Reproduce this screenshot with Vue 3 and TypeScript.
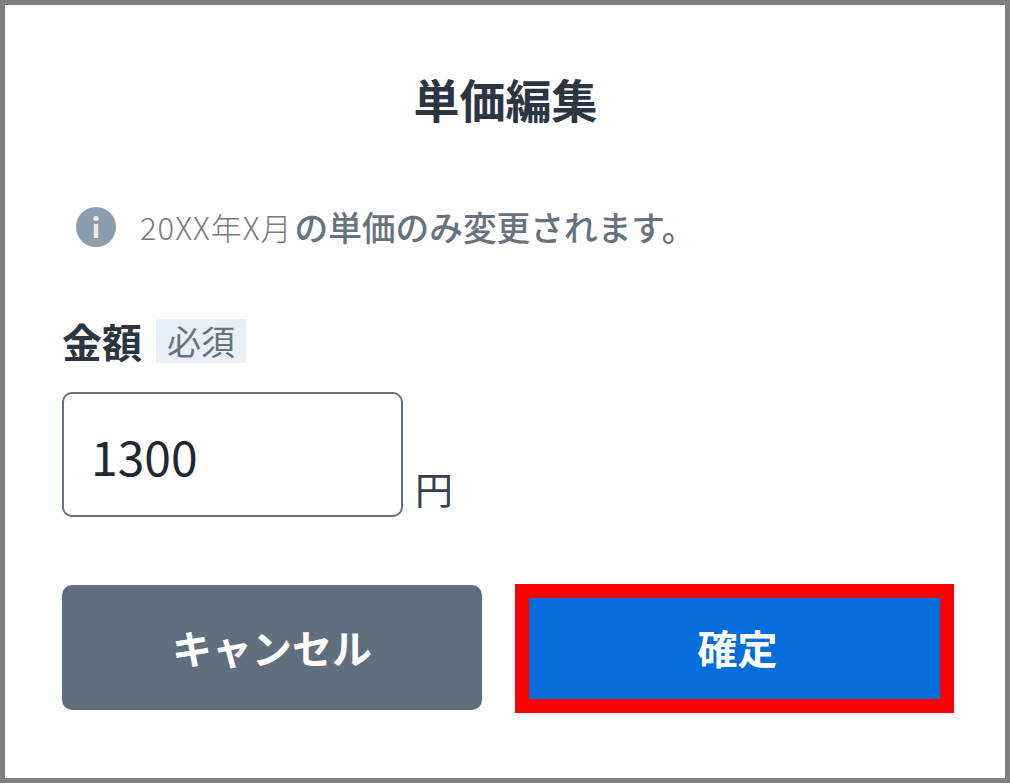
<script setup lang="ts">
const title: string = '単価編集'
</script>

<template>
  <div class="frame">
    <h1 class="title">{{ title }}</h1>
    <div class="notice">
      <svg class="info" width="40" height="40" viewBox="0 0 40 40" aria-hidden="true">
        <circle cx="20" cy="20" r="20" fill="#8d9db0" />
        <circle cx="20" cy="11.5" r="2.6" fill="#e8ecf1" />
        <rect x="17.8" y="17" width="4.4" height="14" fill="#e8ecf1" />
      </svg>
      <span class="date">20XX年X月</span><span class="msg">の単価のみ変更されます。</span>
    </div>
    <div class="label-row">
      <span class="label">金額</span>
      <span class="required">必須</span>
    </div>
    <div class="field-row">
      <div class="input">1300</div>
      <span class="unit">円</span>
    </div>
    <div class="actions">
      <button class="btn cancel" type="button">キャンセル</button>
      <div class="highlight">
        <button class="btn confirm" type="button">確定</button>
      </div>
    </div>
  </div>
</template>

<style scoped>
.frame {
  box-sizing: border-box;
  width: 1010px;
  height: 783px;
  border: 5px solid #7f7f7f;
  background: #fff;
  padding: 0 51px 0 57px;
  display: flex;
  flex-direction: column;
  font-family: "Noto Sans CJK JP", "Noto Sans", sans-serif;
  color: #2b3642;
  overflow: hidden;
}
.title {
  margin: 62px 0 0 0;
  height: 62px;
  line-height: 62px;
  font-size: 46px;
  font-weight: 700;
  text-align: center;
  color: #2b3642;
  padding-right: 5px;
}
.notice {
  margin-top: 78px;
  margin-left: 14px;
  height: 40px;
  display: flex;
  align-items: center;
  color: #66727f;
}
.info {
  flex: none;
  margin-right: 24px;
}
.date {
  font-size: 31px;
  font-weight: 300;
  letter-spacing: 1px;
  line-height: 40px;
  color: #7a7a7a;
  margin-right: 2px;
}
.msg {
  font-size: 33.7px;
  font-weight: 500;
  line-height: 40px;
  color: #66727f;
}
.label-row {
  margin-top: 72px;
  height: 44px;
  display: flex;
  align-items: center;
  gap: 14px;
}
.label {
  font-size: 40px;
  font-weight: 700;
  color: #2b3642;
}
.required {
  background: #e9eff6;
  color: #66727f;
  font-size: 34px;
  line-height: 44px;
  height: 44px;
  width: 90px;
  text-align: center;
  border-radius: 2px;
}
.field-row {
  margin-top: 29px;
  display: flex;
  align-items: flex-end;
  gap: 12px;
}
.input {
  box-sizing: border-box;
  width: 341px;
  height: 125px;
  border: 2px solid #64727f;
  border-radius: 10px;
  padding-left: 27px;
  font-size: 48px;
  line-height: 123px;
  color: #1f2933;
}
.unit {
  font-size: 38px;
  line-height: 48px;
  color: #33404d;
  margin-bottom: 5px;
}
.actions {
  margin-top: 67px;
  display: flex;
  align-items: flex-start;
  gap: 33px;
}
.btn {
  border: none;
  font-family: inherit;
  font-size: 40px;
  font-weight: 700;
  color: #fff;
  padding: 0 0 2px;
}
.cancel {
  width: 420px;
  height: 125px;
  margin-top: 1px;
  background: #616e7e;
  border-radius: 10px;
}
.highlight {
  box-sizing: border-box;
  width: 439px;
  height: 129px;
  border: 14px solid #ff0000;
}
.confirm {
  display: block;
  width: 100%;
  height: 100%;
  padding: 0 0 3px 6px;
  background: #056cdb;
}
</style>
